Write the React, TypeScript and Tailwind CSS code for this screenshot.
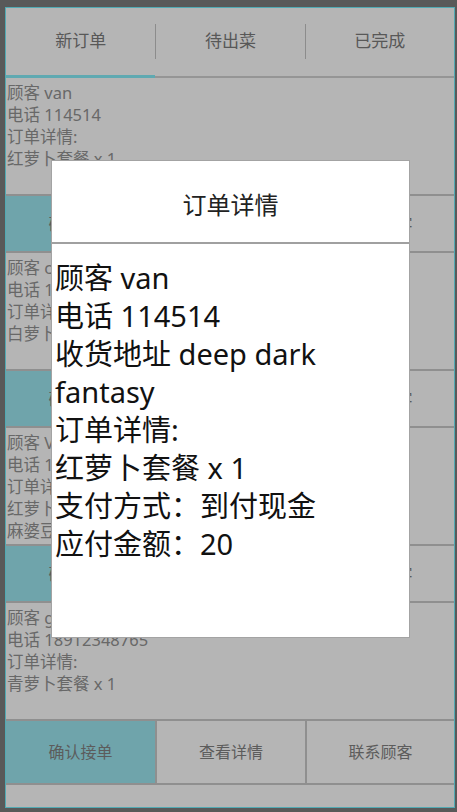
import React from 'react'

type Order = { name: string; phone: string; items: string[] }

const orders: Order[] = [
  { name: 'van', phone: '114514', items: ['红萝卜套餐 x 1'] },
  { name: 'cc', phone: '13812345678', items: ['白萝卜套餐 x 1'] },
  { name: 'Van', phone: '15866668888', items: ['红萝卜套餐 x 1', '麻婆豆腐 x 1'] },
  { name: 'gg', phone: '18912348765', items: ['青萝卜套餐 x 1'] },
]

const tabs = ['新订单', '待出菜', '已完成']

function OrderCard({ order, last }: { order: Order; last?: boolean }) {
  return (
    <div>
      <div className="h-[116px] pl-[1px] pt-[4px] text-[16.5px] leading-[22px] text-[#686868]">
        <p>顾客 {order.name}</p>
        <p>电话 {order.phone}</p>
        <p>订单详情:</p>
        {order.items.map((it) => (
          <p key={it}>{it}</p>
        ))}
      </div>
      <div
        className={`flex border-y-2 border-[#8f8f8f] text-[16px] text-[#5c5c5c] ${last ? 'h-[66px]' : 'h-[59px]'}`}
      >
        <div className="flex w-[149px] items-center justify-center bg-[#6fa4ab]">确认接单</div>
        <div className="flex w-[150px] items-center justify-center border-l-2 border-[#8f8f8f]">查看详情</div>
        <div className="flex flex-1 items-center justify-center border-l-2 border-[#8f8f8f]">联系顾客</div>
      </div>
    </div>
  )
}

export default function App() {
  return (
    <div className="relative h-[812px] w-[457px] overflow-hidden bg-[#595959] pl-[5px] pt-[7px] font-['Noto_Sans','Noto_Sans_CJK_SC',sans-serif]">
      <div className="flex h-[801px] w-[450px] flex-col border border-[#52aab3] bg-[#b5b5b5]">
        {/* tabs */}
        <div className="flex h-[66px] items-center text-[17px] text-[#585858]">
          {tabs.map((t, i) => (
            <div key={t} className="flex flex-1 items-center">
              {i > 0 && <div className="h-[35px] w-px bg-[#8c8c8c]" />}
              <div className="flex-1 text-center">{t}</div>
            </div>
          ))}
        </div>
        <div className="flex h-[4px]">
          <div className="mt-[1px] h-[3px] w-[149px] bg-[#5fa9b1]" />
          <div className="mt-[2px] h-[2px] flex-1 bg-[#959595]" />
        </div>

        {orders.map((o, i) => (
          <OrderCard key={i} order={o} last={i === orders.length - 1} />
        ))}
      </div>

      {/* order detail dialog */}
      <div className="absolute left-[51px] top-[160px] flex h-[478px] w-[359px] flex-col border border-[#a3a3a3] bg-white">
        <div className="flex h-[81px] items-center justify-center pt-[7px] text-[24px] text-[#222]">订单详情</div>
        <div className="h-[2px] bg-[#a0a0a0]" />
        <div className="pl-[3px] pt-[15px] text-[29px] leading-[38px] text-[#111]">
          <p>顾客 van</p>
          <p>电话 114514</p>
          <p>收货地址 deep dark fantasy</p>
          <p>订单详情:</p>
          <p>红萝卜套餐 x 1</p>
          <p>支付方式：到付现金</p>
          <p>应付金额：20</p>
        </div>
      </div>
    </div>
  )
}
